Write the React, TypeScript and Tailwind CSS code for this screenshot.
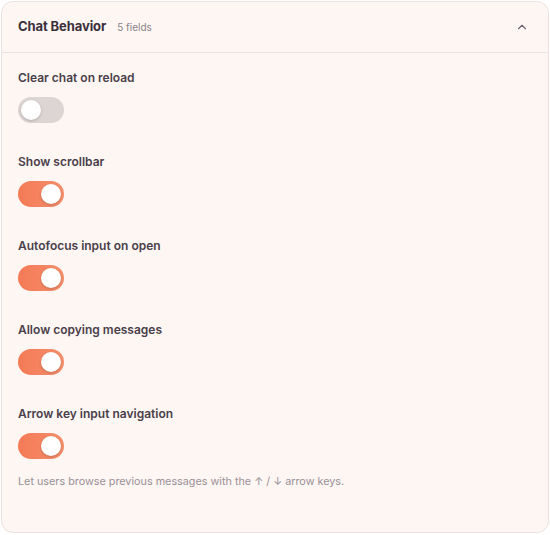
import { ChevronUp } from "lucide-react";

type Field = {
    label: string;
    on: boolean;
    help?: string;
};

const fields: Field[] = [
    { label: "Clear chat on reload", on: false },
    { label: "Show scrollbar", on: true },
    { label: "Autofocus input on open", on: true },
    { label: "Allow copying messages", on: true },
    {
        label: "Arrow key input navigation",
        on: true,
        help: "Let users browse previous messages with the ↑ / ↓ arrow keys.",
    },
];

const Toggle = ({ on }: { on: boolean }) => (
    <div
        className={`relative w-[46px] h-[26px] rounded-full ${
            on ? "bg-gradient-to-r from-[#f47a57] to-[#f58e6b]" : "bg-[#dcd5d3]"
        }`}
    >
        <div
            className={`absolute top-[3px] w-[20px] h-[20px] rounded-full bg-white shadow-[0_1px_3px_rgba(0,0,0,0.2)] ${
                on ? "left-[23px]" : "left-[3px]"
            }`}
        />
    </div>
);

const App = () => {
    return (
        <div className="w-[550px] h-[535px] bg-white pt-[1px] pl-[1px] font-['Inter',sans-serif]">
            <div className="h-[532px] w-[548px] border border-[#ebe2df] rounded-[12px] bg-[#fdf6f3] overflow-hidden">
                <div className="h-[51px] flex items-center justify-between px-[16px] border-b border-[#ebe2df]">
                    <div className="flex items-baseline gap-[11px]">
                        <h2 className="text-[13px] font-bold tracking-[-0.1px] text-[#3b2f3b]">Chat Behavior</h2>
                        <span className="text-[10px] text-[#8c828a]">5 fields</span>
                    </div>
                    <ChevronUp size={14} strokeWidth={2} className="text-[#6e6470] mr-[3px]" />
                </div>

                <div className="flex flex-col gap-[31px] px-[16px] pt-[17px]">
                    {fields.map((field, index) => (
                        <div key={index} className="flex flex-col">
                            <span className="h-[16px] leading-[16px] text-[12px] font-semibold text-[#4a3e4a]">
                                {field.label}
                            </span>
                            <div className="mt-[11px]">
                                <Toggle on={field.on} />
                            </div>
                            {field.help && (
                                <p className="mt-[15px] leading-[16px] text-[10.8px] text-[#9a9096]">
                                    {field.help}
                                </p>
                            )}
                        </div>
                    ))}
                </div>
            </div>
        </div>
    );
};

export default App;
